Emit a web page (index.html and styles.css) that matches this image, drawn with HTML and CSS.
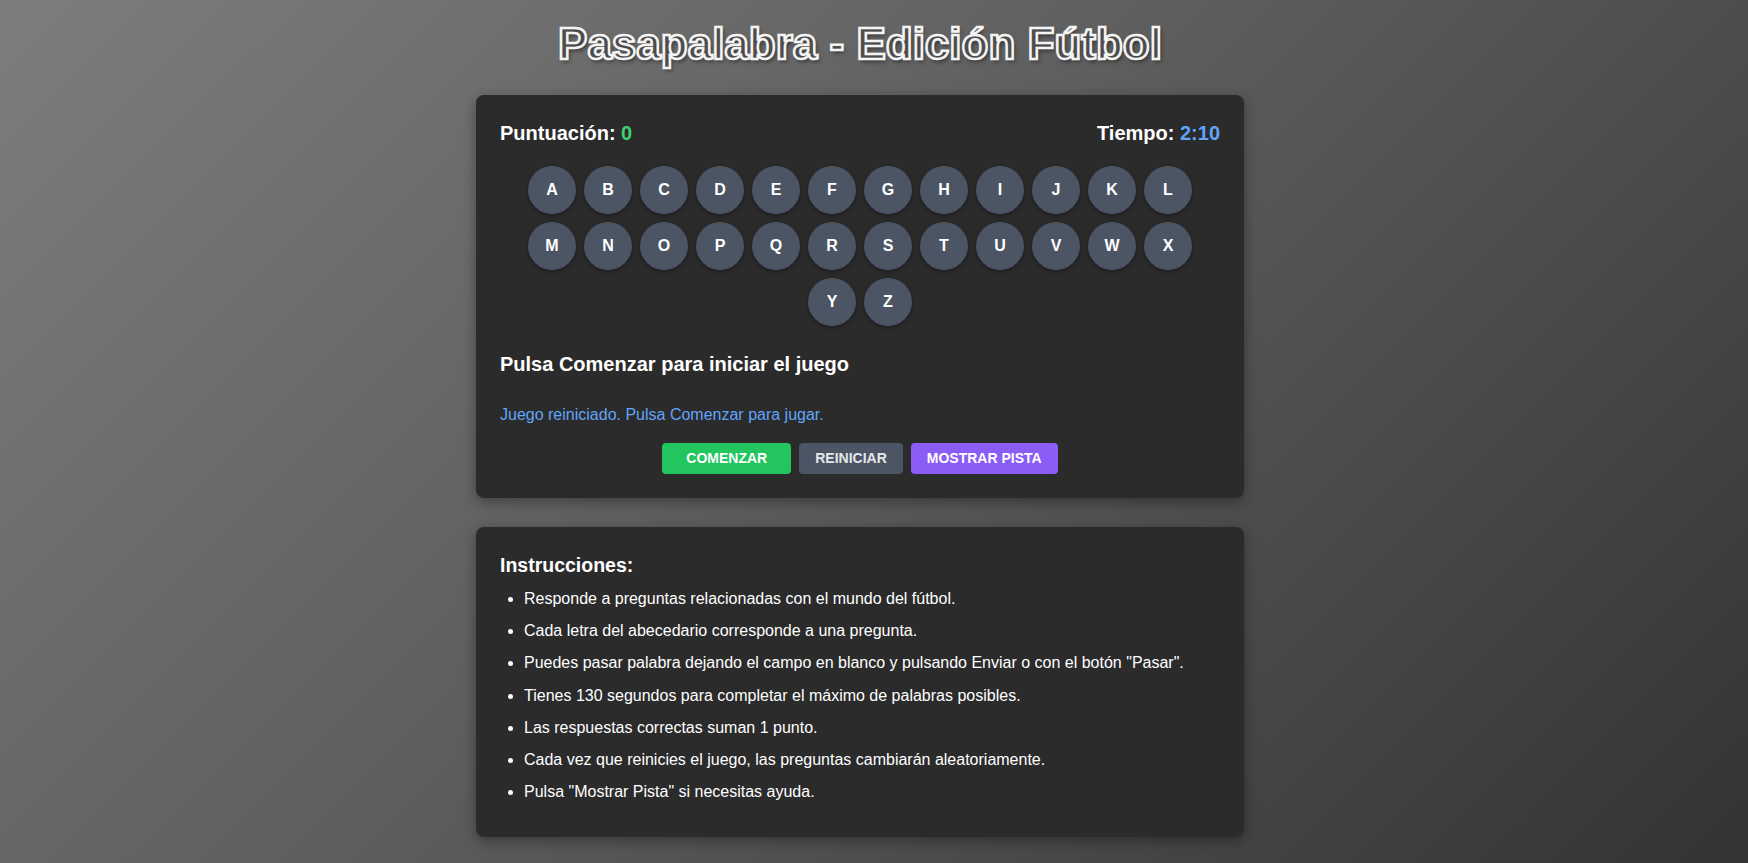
FILE: index.html
```html
<!DOCTYPE html>
<html lang="es">
<head>
<meta charset="utf-8">
<title>Pasapalabra - Edición Fútbol</title>
<link rel="stylesheet" href="styles.css">
</head>
<body>
<div class="page">
  <h1 class="title">Pasapalabra - Edición Fútbol</h1>

  <section class="card game">
    <div class="stats">
      <div class="stat">Puntuación: <span class="score">0</span></div>
      <div class="stat">Tiempo: <span class="time">2:10</span></div>
    </div>

    <div class="letters">
      <span class="letter">A</span><span class="letter">B</span><span class="letter">C</span><span class="letter">D</span><span class="letter">E</span><span class="letter">F</span><span class="letter">G</span><span class="letter">H</span><span class="letter">I</span><span class="letter">J</span><span class="letter">K</span><span class="letter">L</span><span class="letter">M</span><span class="letter">N</span><span class="letter">O</span><span class="letter">P</span><span class="letter">Q</span><span class="letter">R</span><span class="letter">S</span><span class="letter">T</span><span class="letter">U</span><span class="letter">V</span><span class="letter">W</span><span class="letter">X</span><span class="letter">Y</span><span class="letter">Z</span>
    </div>

    <h2 class="question">Pulsa Comenzar para iniciar el juego</h2>
    <p class="message">Juego reiniciado. Pulsa Comenzar para jugar.</p>

    <div class="buttons">
      <button class="btn btn-start">COMENZAR</button>
      <button class="btn btn-reset">REINICIAR</button>
      <button class="btn btn-hint">MOSTRAR PISTA</button>
    </div>
  </section>

  <section class="card instructions">
    <h2 class="inst-title">Instrucciones:</h2>
    <ul class="inst-list">
      <li>Responde a preguntas relacionadas con el mundo del fútbol.</li>
      <li>Cada letra del abecedario corresponde a una pregunta.</li>
      <li>Puedes pasar palabra dejando el campo en blanco y pulsando Enviar o con el botón "Pasar".</li>
      <li>Tienes 130 segundos para completar el máximo de palabras posibles.</li>
      <li>Las respuestas correctas suman 1 punto.</li>
      <li>Cada vez que reinicies el juego, las preguntas cambiarán aleatoriamente.</li>
      <li>Pulsa "Mostrar Pista" si necesitas ayuda.</li>
    </ul>
  </section>
</div>
</body>
</html>
```

FILE: styles.css
```css
* { box-sizing: border-box; }

html, body {
  margin: 0;
  min-height: 100%;
}

body {
  font-family: "Liberation Sans", Arial, sans-serif;
  color: #ffffff;
  background: linear-gradient(135deg, #7e7d7d 0%, #5e5e5e 45%, #333333 100%);
  background-attachment: fixed;
  min-height: 863px;
  padding: 19px 28px 30px 0;
}

.page {
  width: 768px;
  margin: 0 auto;
  display: flex;
  flex-direction: column;
}

.title {
  margin: 0 0 26px;
  font-size: 44px;
  line-height: 50px;
  font-weight: 700;
  text-align: center;
  color: #4c4c4c;
  -webkit-text-stroke: 2.5px #f4f4f4;
  text-shadow: 2px 3px 4px rgba(0, 0, 0, 0.45);
}

.card {
  background: #2b2b2b;
  border-radius: 8px;
  box-shadow: 0 4px 14px rgba(0, 0, 0, 0.35);
  padding: 24px;
}

.game {
  margin-bottom: 29px;
}

.stats {
  display: flex;
  justify-content: space-between;
  font-size: 20px;
  line-height: 28px;
  font-weight: 700;
  margin-bottom: 15px;
}

.score { color: #3ecf6e; }
.time { color: #60a5fa; }

.letters {
  display: flex;
  flex-wrap: wrap;
  justify-content: center;
  margin-bottom: 20px;
}

.letter {
  width: 48px;
  height: 48px;
  margin: 4px;
  border-radius: 50%;
  background: #4b5563;
  box-shadow: 0 2px 4px rgba(0, 0, 0, 0.3);
  display: flex;
  align-items: center;
  justify-content: center;
  font-size: 16px;
  font-weight: 700;
  color: #ffffff;
}

.question {
  margin: 0 0 25px;
  font-size: 20px;
  line-height: 28px;
  font-weight: 700;
}

.message {
  margin: 0 0 16px;
  font-size: 16px;
  line-height: 24px;
  color: #60a5fa;
}

.buttons {
  display: flex;
  justify-content: center;
  gap: 8px;
}

.btn {
  font-family: "Liberation Sans", Arial, sans-serif;
  font-size: 14px;
  font-weight: 700;
  line-height: 15px;
  padding: 8px 16px;
  border: none;
  border-radius: 4px;
  color: #ffffff;
  cursor: pointer;
}

.btn-start {
  background: #22c55e;
  padding: 8px 24px;
}

.btn-reset {
  background: #4b5563;
  color: #e5e7eb;
}

.btn-hint {
  background: #8b5cf6;
}

.instructions {
  padding-bottom: 25px;
}

.inst-title {
  margin: 0 0 8px;
  font-size: 19.5px;
  line-height: 28px;
  font-weight: 700;
}

.inst-list {
  margin: 0;
  padding-left: 24px;
}

.inst-list li {
  font-size: 16px;
  line-height: 24px;
  margin-bottom: 8.2px;
}
```
